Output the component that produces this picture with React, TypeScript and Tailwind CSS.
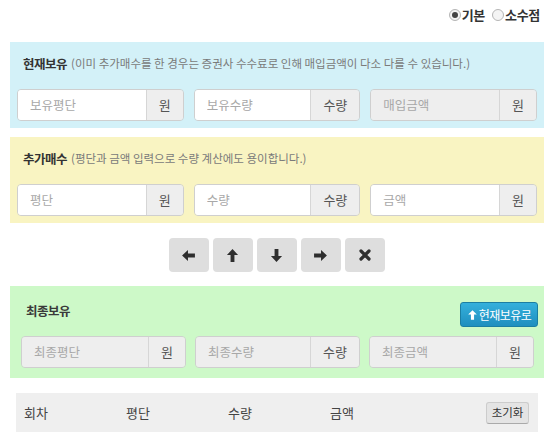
const font = { fontFamily: '"Noto Sans CJK KR", "Noto Sans", sans-serif' };

function Field({
  placeholder,
  unit,
  disabled,
}: {
  placeholder: string;
  unit: string;
  disabled?: boolean;
}) {
  return (
    <div className="flex h-[32px] rounded-[4px] border border-[#cfcfcf] overflow-hidden">
      <input
        readOnly
        placeholder={placeholder}
        className={`min-w-0 flex-1 px-[12px] text-[12.5px] outline-none placeholder:text-[#a8a8a8] ${
          disabled ? "bg-[#eeeeee]" : "bg-white"
        }`}
      />
      <div className="flex items-center justify-center px-[12px] bg-[#eeeeee] border-l border-[#d6d6d6] text-[13px] text-[#555555]">
        {unit}
      </div>
    </div>
  );
}

function Radio({ checked, label }: { checked?: boolean; label: string }) {
  return (
    <label className="flex items-center gap-[1px]">
      <span className="flex items-center justify-center w-[12px] h-[12px] rounded-full border border-[#b5b5b5] bg-[#f4f4f4]">
        {checked && <span className="w-[6px] h-[6px] rounded-full bg-[#444444]" />}
      </span>
      <span className="text-[13px] font-bold text-[#333333] tracking-[-0.3px]">{label}</span>
    </label>
  );
}

function Arrow({ dir }: { dir: "left" | "up" | "down" | "right" }) {
  const rot = { left: 0, up: 90, down: 270, right: 180 }[dir];
  return (
    <svg width="15" height="15" viewBox="0 0 14 14" style={{ transform: `rotate(${rot}deg)` }}>
      <path d="M1 7 L6.5 1.8 L6.5 5.2 L13 5.2 L13 8.8 L6.5 8.8 L6.5 12.2 Z" fill="#2e2e2e" />
    </svg>
  );
}

function NavButton({ children }: { children: React.ReactNode }) {
  return (
    <button className="flex items-center justify-center w-[40px] h-[34px] rounded-[4px] bg-[#dedede]">
      {children}
    </button>
  );
}

export default function App() {
  return (
    <div className="w-[553px] h-[441px] bg-white overflow-hidden" style={font}>
      <div className="flex h-[30px] items-center justify-end gap-[7px] pr-[13px]">
        <Radio checked label="기본" />
        <Radio label="소수점" />
      </div>

      <div className="mt-[12px] ml-[10px] mr-[9px] bg-[#d3f1f8] pt-[12px] pb-[7px] px-[7px]">
        <div className="flex h-[20px] items-center ml-[6px] mb-[15px]">
          <span className="text-[12.5px] font-bold text-[#333333] tracking-[-0.5px]">현재보유</span>
          <span className="ml-[4px] text-[11.5px] text-[#7a7a7a]">
            (이미 추가매수를 한 경우는 증권사 수수료로 인해 매입금액이 다소 다를 수 있습니다.)
          </span>
        </div>
        <div className="grid grid-cols-3 gap-[10px]">
          <Field placeholder="보유평단" unit="원" />
          <Field placeholder="보유수량" unit="수량" />
          <Field placeholder="매입금액" unit="원" disabled />
        </div>
      </div>

      <div className="mt-[9px] ml-[10px] mr-[9px] bg-[#f9f4c2] pt-[12px] pb-[7px] px-[7px]">
        <div className="flex h-[20px] items-center ml-[6px] mb-[15px]">
          <span className="text-[12.5px] font-bold text-[#333333] tracking-[-0.5px]">추가매수</span>
          <span className="ml-[4px] text-[11.5px] text-[#7a7a7a]">
            (평단과 금액 입력으로 수량 계산에도 용이합니다.)
          </span>
        </div>
        <div className="grid grid-cols-3 gap-[10px]">
          <Field placeholder="평단" unit="원" />
          <Field placeholder="수량" unit="수량" />
          <Field placeholder="금액" unit="원" />
        </div>
      </div>

      <div className="mt-[15px] flex justify-center gap-[4px]">
        <NavButton>
          <Arrow dir="left" />
        </NavButton>
        <NavButton>
          <Arrow dir="up" />
        </NavButton>
        <NavButton>
          <Arrow dir="down" />
        </NavButton>
        <NavButton>
          <Arrow dir="right" />
        </NavButton>
        <NavButton>
          <svg width="12" height="12" viewBox="0 0 12 12">
            <path d="M2 2 L10 10 M10 2 L2 10" stroke="#2e2e2e" strokeWidth="3.2" strokeLinecap="round" />
          </svg>
        </NavButton>
      </div>

      <div className="mt-[14px] ml-[10px] mr-[9px] bg-[#cdf9c8] pt-[15px] pb-[10px]">
        <div className="flex h-[26px] items-start justify-between pl-[16px] pr-[6px]">
          <div className="flex h-[20px] items-center text-[12.5px] font-bold text-[#3a3a3a] tracking-[-0.5px]">
            최종보유
          </div>
          <button className="mt-[1px] flex h-[25px] w-[78px] items-center justify-center gap-[1px] rounded-[3px] border border-[#1b7ea3] bg-gradient-to-b from-[#34b0dc] to-[#1f8fbf] text-[12px] text-white tracking-[-0.5px]">
            <svg width="11" height="12" viewBox="0 0 14 14" style={{ transform: "rotate(90deg)" }}>
              <path d="M1 7 L6.5 1.5 L6.5 5 L13 5 L13 9 L6.5 9 L6.5 12.5 Z" fill="white" />
            </svg>
            현재보유로
          </button>
        </div>
        <div className="mt-[9px] grid grid-cols-3 gap-[9px] pl-[11px] pr-[10px]">
          <Field placeholder="최종평단" unit="원" disabled />
          <Field placeholder="최종수량" unit="수량" disabled />
          <Field placeholder="최종금액" unit="원" disabled />
        </div>
      </div>

      <div className="mt-[15px] ml-[16px] mr-[15px] flex h-[39px] items-center bg-[#efefef] pl-[8px] pr-[9px] text-[13px] text-[#444444]">
        <div className="w-[102px]">회차</div>
        <div className="w-[102px]">평단</div>
        <div className="w-[102px]">수량</div>
        <div className="w-[102px]">금액</div>
        <div className="flex-1" />
        <button className="flex h-[22px] w-[43px] items-center justify-center rounded-[3px] border border-[#cccccc] border-b-[#aaaaaa] bg-[#e4e4e4] text-[11.5px] text-[#333333]">
          초기화
        </button>
      </div>
    </div>
  );
}
